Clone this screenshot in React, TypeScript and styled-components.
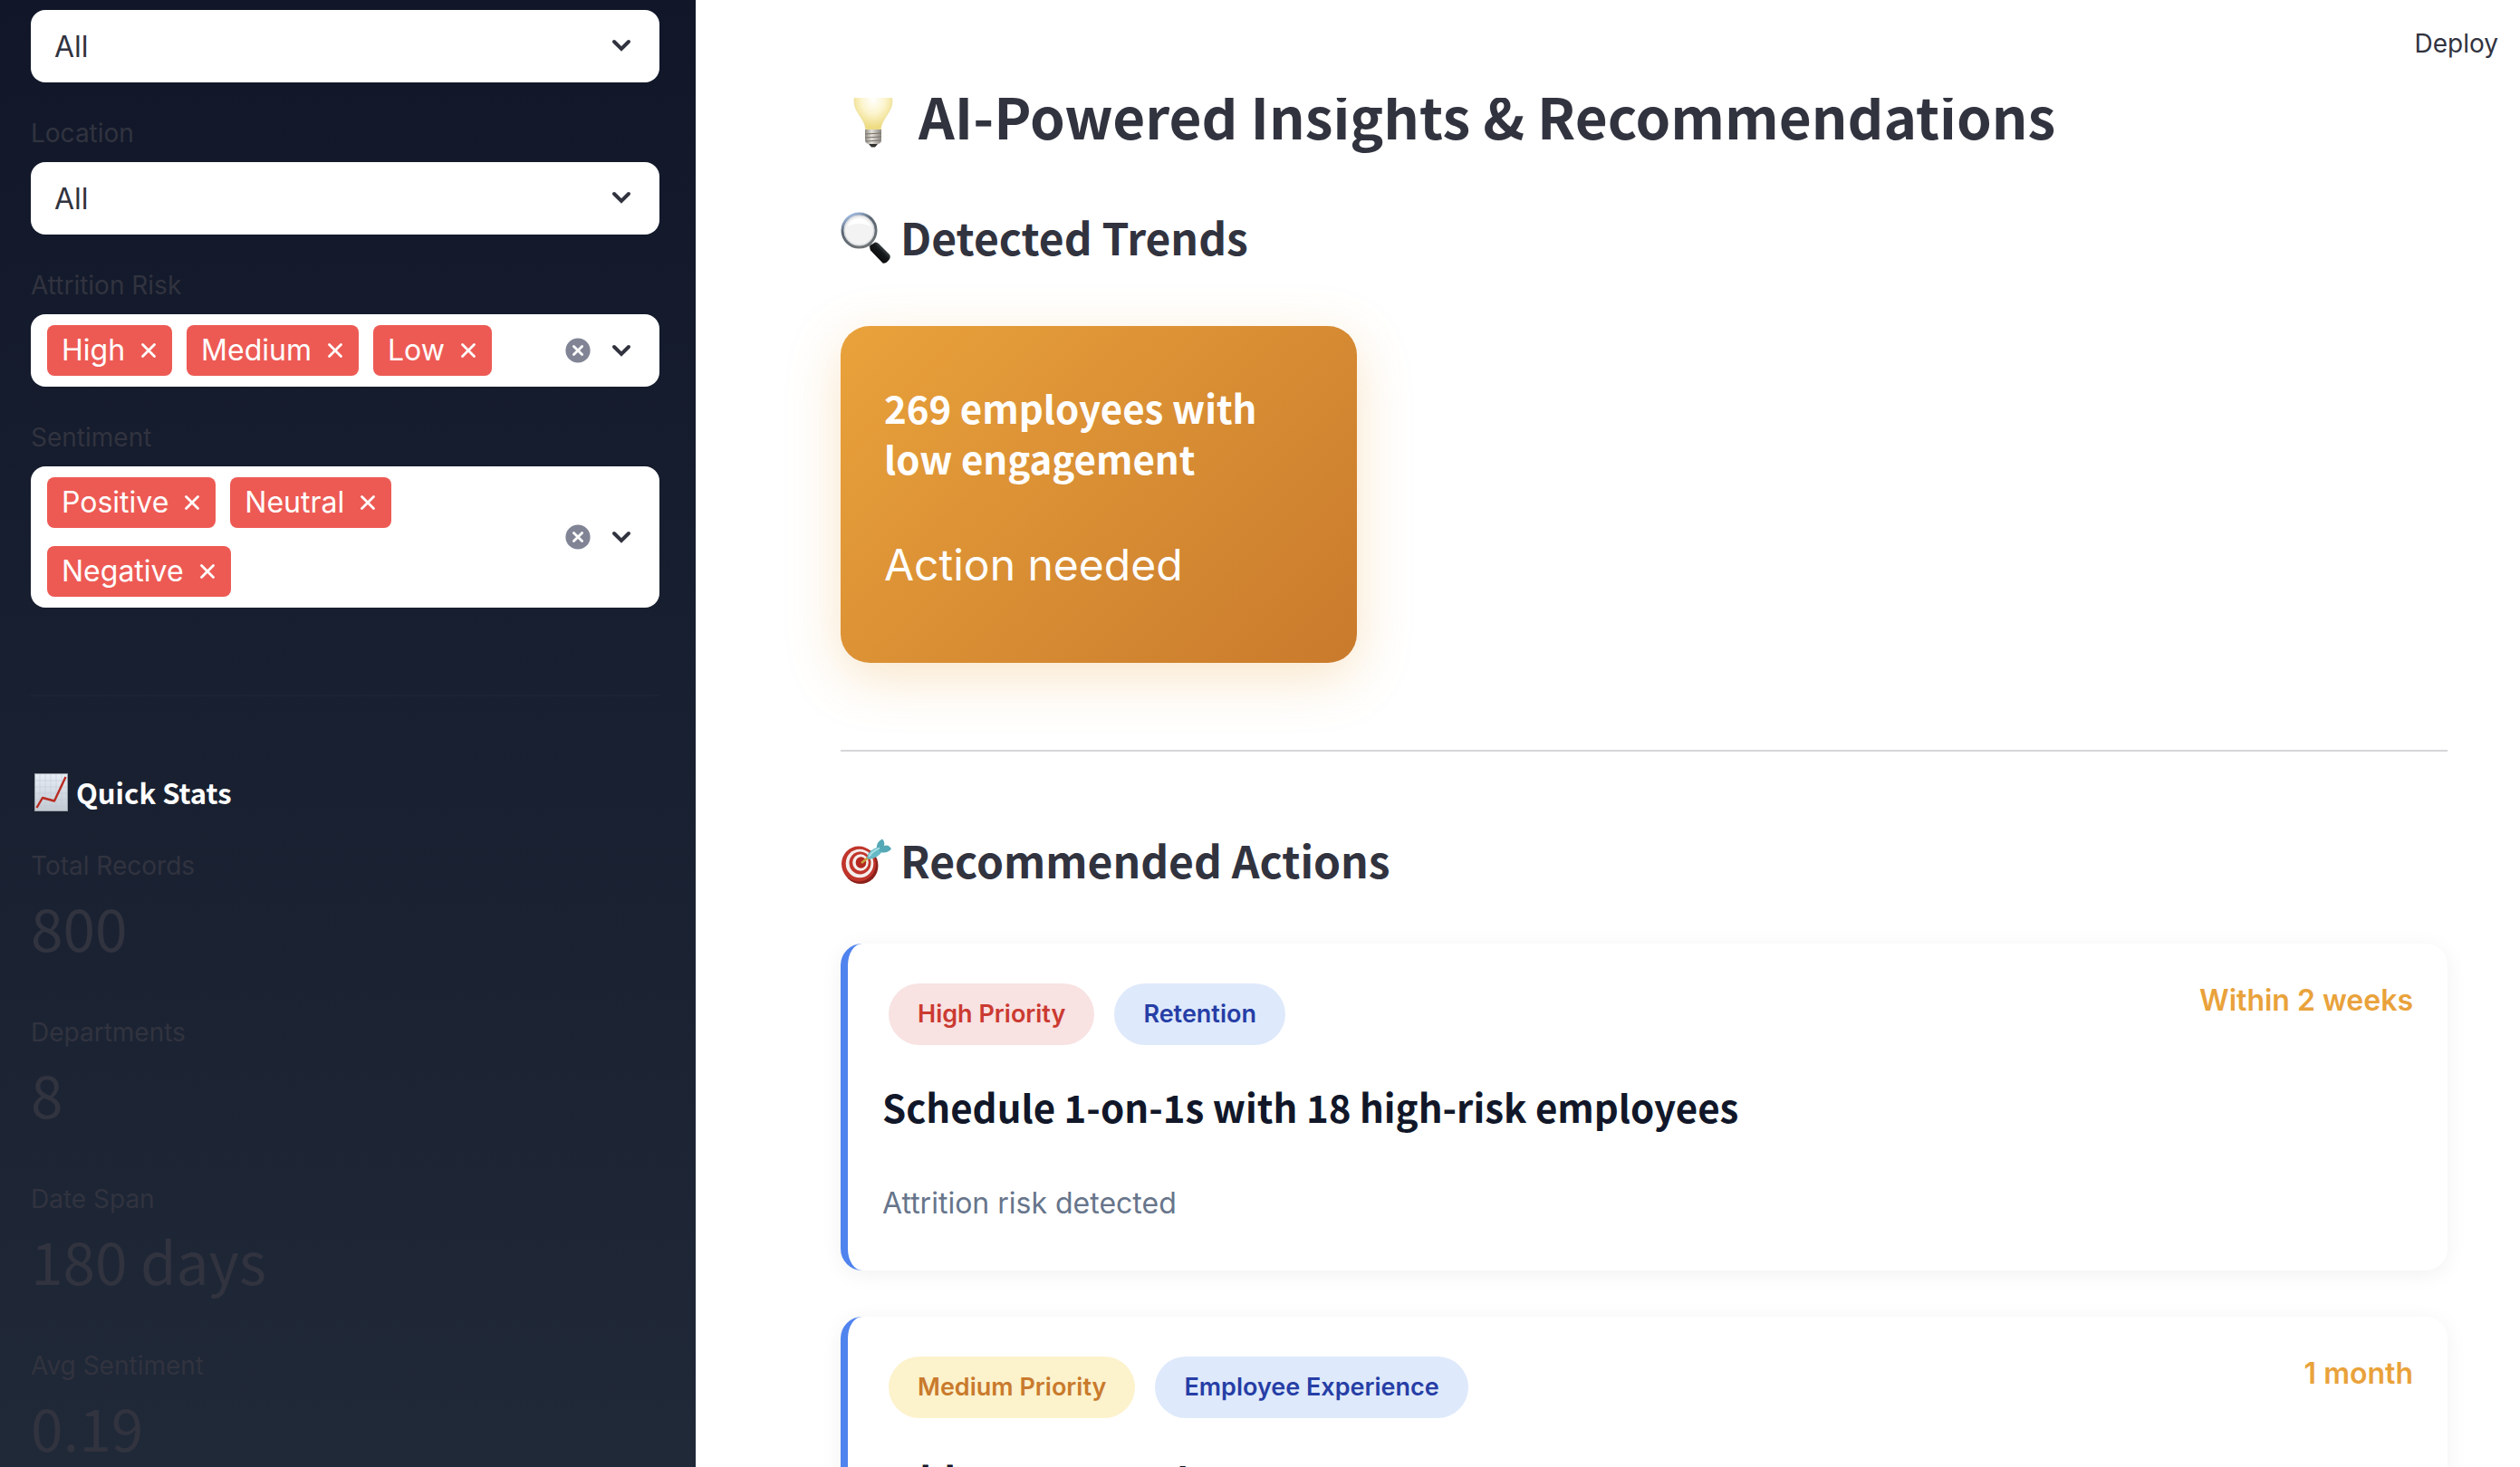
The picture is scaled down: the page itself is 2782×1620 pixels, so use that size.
import React, { useState } from "react";
import styled, { createGlobalStyle } from "styled-components";

const GlobalStyle = createGlobalStyle`
  *, *::before, *::after { box-sizing: border-box; }
  html, body, #root { height: 100%; }
  body {
    margin: 0;
    background: #ffffff;
    color: #31333f;
    font-family: Inter, "Liberation Sans", sans-serif;
    font-size: 32px;
    line-height: 1.6;
  }
  h2, h3, h4, h5, p, dl, dd { margin: 0; }
  button, select { font: inherit; color: inherit; }
`;

const headingFont = `"Noto Sans CJK SC", "Source Sans Pro", sans-serif`;

const Shell = styled.div`
  display: grid;
  grid-template-columns: 768px minmax(0, 1fr);
  height: 100vh;
  overflow: hidden;
`;

const Sidebar = styled.aside`
  height: 100vh;
  overflow: hidden;
  padding: 11px 40px 0 34px;
  background: linear-gradient(180deg, #111729 0%, #202938 100%);
`;

const Filters = styled.form`
  display: flex;
  flex-direction: column;
  gap: 32px;
`;

const Field = styled.div`
  display: flex;
  flex-direction: column;
  gap: 8px;
`;

const FieldLabel = styled.label`
  font-size: 28px;
  line-height: 48px;
`;

const ControlBox = styled.div`
  position: relative;
  display: flex;
  align-items: center;
  min-height: 80px;
  border-radius: 16px;
  background: #ffffff;
`;

const Select = styled.select`
  appearance: none;
  width: 100%;
  height: 80px;
  padding: 2px 80px 0 26px;
  border: 0;
  border-radius: 16px;
  background: transparent;
  font-size: 32px;
`;

const SelectArrow = styled.span`
  position: absolute;
  right: 22px;
  top: 19px;
  display: flex;
  pointer-events: none;
`;

const TagList = styled.div`
  display: flex;
  flex: 1;
  flex-wrap: wrap;
  gap: 20px 16px;
  padding: 12px 18px;
`;

const Tag = styled.span`
  display: inline-flex;
  align-items: center;
  gap: 12px;
  height: 56px;
  padding: 0 12px 0 16px;
  border-radius: 8px;
  background: #ed5a54;
  color: #ffffff;
  line-height: 56px;
`;

const IconButton = styled.button`
  display: inline-flex;
  align-items: center;
  justify-content: center;
  padding: 0;
  border: 0;
  background: none;
  cursor: pointer;
`;

const Controls = styled.div`
  display: flex;
  align-items: center;
  gap: 14px;
  padding-right: 22px;
`;

const SideRule = styled.hr`
  height: 2px;
  margin: 96px 0 60px;
  border: 0;
  background: rgba(49, 51, 63, 0.2);
`;

const SideHeading = styled.h5`
  display: flex;
  align-items: center;
  gap: 8px;
  height: 92px;
  margin-bottom: 13px;
  color: #ffffff;
  font-family: ${headingFont};
  font-size: 31px;
  font-weight: 700;
  line-height: 48px;
`;

const Metrics = styled.dl`
  display: flex;
  flex-direction: column;
  gap: 32px;
`;

const Metric = styled.div`
  height: 152px;
`;

const MetricLabel = styled.dt`
  font-size: 28px;
  line-height: 44px;
`;

const MetricValue = styled.dd`
  font-family: ${headingFont};
  font-size: 64px;
  font-weight: 400;
  line-height: 90px;
`;

const Main = styled.main`
  display: flex;
  flex-direction: column;
  height: 100vh;
  overflow: hidden;
`;

const TopBar = styled.header`
  position: relative;
  z-index: 1;
  display: flex;
  flex-shrink: 0;
  justify-content: flex-end;
  height: 108px;
  padding: 20px 24px 0;
  background: #ffffff;
`;

const DeployButton = styled.button`
  height: 56px;
  padding: 0;
  border: 0;
  background: none;
  font-size: 28px;
  cursor: pointer;
`;

const Content = styled.div`
  flex: 1;
  min-height: 0;
  padding: 0 80px 0 160px;
`;

const PageTitle = styled.h2`
  display: flex;
  align-items: center;
  gap: 14px;
  height: 86px;
  margin-top: -24px;
  font-family: ${headingFont};
  font-size: 62px;
  font-weight: 700;
  line-height: 86px;
  white-space: nowrap;
`;

const SectionTitle = styled.h3`
  display: flex;
  align-items: center;
  gap: 10px;
  font-family: ${headingFont};
  font-size: 48px;
  font-weight: 700;
  line-height: 68px;
  white-space: nowrap;

  svg { margin-top: 4px; }
`;

const TrendsSection = styled.section`
  padding-top: 57px;
`;

const TrendGrid = styled.div`
  display: grid;
  grid-template-columns: repeat(3, minmax(0, 1fr));
  gap: 32px;
  margin-top: 65px;
`;

const TrendCard = styled.article`
  min-height: 372px;
  padding: 62px 48px 48px;
  border-radius: 32px;
  background: linear-gradient(135deg, #e9a23b 0%, #c97a2c 100%);
  box-shadow: 0 16px 60px rgba(233, 162, 59, 0.28);
  color: #ffffff;
`;

const TrendTitle = styled.h4`
  font-family: ${headingFont};
  font-size: 42px;
  font-weight: 700;
  line-height: 56px;
`;

const TrendText = styled.p`
  margin-top: 52px;
  font-size: 48px;
  line-height: 76px;
`;

const Rule = styled.hr`
  height: 2px;
  margin: 96px 0 85px;
  border: 0;
  background: #d6d6d9;
`;

const ActionList = styled.div`
  display: flex;
  flex-direction: column;
  gap: 51px;
  margin-top: 59px;
`;

const ActionCard = styled.article`
  padding: 38px;
  height: 361px;
  border-left: 8px solid #4f83ee;
  border-radius: 24px;
  background: #ffffff;
  box-shadow: 0 4px 24px rgba(0, 0, 0, 0.06);
`;

const ActionTop = styled.div`
  display: flex;
  align-items: flex-start;
  justify-content: space-between;
`;

const Badges = styled.div`
  display: flex;
  gap: 22px;
  padding: 6px 7px;
`;

const tones = {
  high: { background: "#f8e2e2", color: "#cb3a31" },
  medium: { background: "#fcf2cc", color: "#c97a2c" },
  topic: { background: "#dee9fb", color: "#263ea6" },
};

const Badge = styled.span<{ $tone: keyof typeof tones }>`
  padding: 12px 32px;
  border-radius: 34px;
  background: ${(p) => tones[p.$tone].background};
  color: ${(p) => tones[p.$tone].color};
  font-size: 27px;
  font-weight: 600;
  line-height: 44px;
`;

const Timeline = styled.span`
  color: #e9a23b;
  font-weight: 600;
  line-height: 50px;
`;

const ActionTitle = styled.h4`
  margin-top: 30px;
  color: #111729;
  font-family: ${headingFont};
  font-size: 42px;
  font-weight: 700;
  line-height: 64px;
`;

const ActionText = styled.p`
  margin-top: 49px;
  color: #67758b;
  line-height: 51px;
`;

const ChevronIcon = () => (
  <svg width="40" height="40" viewBox="0 0 40 40" fill="none" aria-hidden="true">
    <path d="M12 16 20 24 28 16" stroke="#31333f" strokeWidth="4" strokeLinecap="round" strokeLinejoin="miter" />
  </svg>
);

const CrossIcon = () => (
  <svg width="28" height="28" viewBox="0 0 28 28" fill="none" aria-hidden="true">
    <path d="M7.5 7.5 20.5 20.5M20.5 7.5 7.5 20.5" stroke="#ffffff" strokeWidth="2.8" strokeLinecap="round" />
  </svg>
);

const ClearIcon = () => (
  <svg width="28" height="28" viewBox="0 0 28 28" fill="none" aria-hidden="true">
    <circle cx="14" cy="14" r="13.6" fill="#808495" />
    <path d="M9.4 9.4 18.6 18.6M18.6 9.4 9.4 18.6" stroke="#ffffff" strokeWidth="2.8" strokeLinecap="round" />
  </svg>
);

const ChartIcon = () => (
  <svg width="42" height="42" viewBox="0 0 42 42" aria-hidden="true">
    <defs>
      <linearGradient id="paper" x1="0" y1="0" x2="0" y2="1">
        <stop offset="0" stopColor="#e6edf6" />
        <stop offset="1" stopColor="#c3cad2" />
      </linearGradient>
    </defs>
    <rect x="4.500" y="0.500" width="36" height="41" fill="url(#paper)" stroke="#9aa1a8" strokeWidth="1" />
    <path d="M10 1V41M16 1V41M22 1V41M28 1V41M34 1V41M5 8H40M5 15H40M5 22H40M5 29H40M5 36H40" stroke="#c2cbd6" strokeWidth="0.6" />
    <path d="M6.500 38 13 27 26 30.500 38.500 4" fill="none" stroke="#b92a20" strokeWidth="2.400" strokeLinejoin="round" />
  </svg>
);

const BulbIcon = () => (
  <svg width="72" height="72" viewBox="0 0 72 72" aria-hidden="true">
    <defs>
      <radialGradient id="glass" cx="0.5" cy="0.34" r="0.62">
        <stop offset="0" stopColor="#ffffff" />
        <stop offset="0.5" stopColor="#fcf5cf" />
        <stop offset="1" stopColor="#eedb80" />
      </radialGradient>
      <linearGradient id="cap" x1="0" y1="0" x2="1" y2="0">
        <stop offset="0" stopColor="#8f8b83" />
        <stop offset="0.4" stopColor="#e4e1da" />
        <stop offset="1" stopColor="#8a867e" />
      </linearGradient>
    </defs>
    <path d="M36 1C23 1 15 10 15 21c0 12 12 19 12.600 31h16.800C45 40 57 33 57 21 57 10 49 1 36 1Z" fill="url(#glass)" stroke="#eadf9f" strokeWidth="0.8" />
    <path d="M27 52H45V64Q45 67 41 68H31Q27 67 27 64Z" fill="url(#cap)" />
    <path d="M27 57 45 56M27 61 45 60M28 65 44 64" stroke="#77736b" strokeWidth="1" />
    <path d="M31 68H41L38 71.500H34Z" fill="#34322f" />
  </svg>
);

const MagnifierIcon = () => (
  <svg width="56" height="58" viewBox="0 0 56 58" aria-hidden="true">
    <defs>
      <linearGradient id="rim" x1="0.200" y1="0" x2="0.700" y2="1">
        <stop offset="0" stopColor="#a9c6ee" />
        <stop offset="0.35" stopColor="#5b6672" />
        <stop offset="1" stopColor="#6f7376" />
      </linearGradient>
      <linearGradient id="grip" x1="0" y1="1" x2="1" y2="0">
        <stop offset="0" stopColor="#000000" />
        <stop offset="0.55" stopColor="#15181a" />
        <stop offset="0.8" stopColor="#596167" />
        <stop offset="1" stopColor="#0e0f10" />
      </linearGradient>
    </defs>
    <path d="M31 35 36 40" stroke="#8b9094" strokeWidth="4" />
    <circle cx="20.500" cy="20.500" r="18.500" fill="#f3f3f4" stroke="url(#rim)" strokeWidth="3" />
    <circle cx="20.500" cy="20.500" r="16.300" fill="none" stroke="#cfd2d6" strokeWidth="1" />
    <path d="M8 16C11 5 29 4 33 16 26 12 15 12 8 16Z" fill="#ffffff" />
    <path d="M33 37 38 33.500Q40 33 42 35L54 47Q56 50 53 53.500 50 57.500 46.500 56.500L33 42.500Q31.500 39 33 37Z" fill="url(#grip)" />
  </svg>
);

const TargetIcon = () => (
  <svg width="56" height="52" viewBox="0 0 56 52" aria-hidden="true">
    <ellipse cx="22" cy="31" rx="19.500" ry="20" fill="#8a201a" />
    <ellipse cx="20" cy="29" rx="19" ry="19.500" fill="#c0342a" />
    <ellipse cx="21" cy="28.500" rx="15.300" ry="15.800" fill="#f5eeec" />
    <ellipse cx="21.500" cy="28" rx="12" ry="12.400" fill="#c2352b" />
    <ellipse cx="22" cy="27.500" rx="8.800" ry="9.200" fill="#f5eeec" />
    <ellipse cx="22.500" cy="27.500" rx="5.800" ry="6.200" fill="#b32920" />
    <path d="M23 28 31 21.500" stroke="#caa13f" strokeWidth="2.600" />
    <path d="M29 22Q30 14 42 10L47 14Q41 23 31 24Z" fill="#66bac6" />
    <path d="M40 12Q39 5 46 1.500Q49 4 48 9Q53 7 56 12.500Q51 18 44.500 16Z" fill="#55a8b5" />
    <path d="M32 20Q35 15 42 12" fill="none" stroke="#a7dde3" strokeWidth="2.400" strokeLinecap="round" />
  </svg>
);

function SelectField({ id, label }: { id: string; label?: string }) {
  return (
    <Field>
      {label && <FieldLabel htmlFor={id}>{label}</FieldLabel>}
      <ControlBox>
        <Select id={id} aria-label={label ?? "Department"}>
          <option>All</option>
        </Select>
        <SelectArrow>
          <ChevronIcon />
        </SelectArrow>
      </ControlBox>
    </Field>
  );
}

function TagField({ id, label, options }: { id: string; label: string; options: string[] }) {
  const [tags, setTags] = useState(options);
  return (
    <Field>
      <FieldLabel as="span" id={id}>
        {label}
      </FieldLabel>
      <ControlBox role="group" aria-labelledby={id}>
        <TagList>
          {tags.map((tag) => (
            <Tag key={tag}>
              {tag}
              <IconButton type="button" aria-label={`Remove ${tag}`} onClick={() => setTags(tags.filter((t) => t !== tag))}>
                <CrossIcon />
              </IconButton>
            </Tag>
          ))}
        </TagList>
        <Controls>
          <IconButton type="button" aria-label="Clear all" onClick={() => setTags([])}>
            <ClearIcon />
          </IconButton>
          <IconButton type="button" aria-label="Open options" onClick={() => setTags(options)}>
            <ChevronIcon />
          </IconButton>
        </Controls>
      </ControlBox>
    </Field>
  );
}

const metrics = [
  { label: "Total Records", value: "800" },
  { label: "Departments", value: "8" },
  { label: "Date Span", value: "180 days" },
  { label: "Avg Sentiment", value: "0.19" },
];

type Action = {
  priority: string;
  tone: keyof typeof tones;
  topic: string;
  timeline: string;
  title: string;
  text?: string;
};

const actions: Action[] = [
  {
    priority: "High Priority",
    tone: "high",
    topic: "Retention",
    timeline: "Within 2 weeks",
    title: "Schedule 1-on-1s with 18 high-risk employees",
    text: "Attrition risk detected",
  },
  {
    priority: "Medium Priority",
    tone: "medium",
    topic: "Employee Experience",
    timeline: "1 month",
    title: "Address 18 employee concerns",
  },
];

export default function App() {
  return (
    <>
      <GlobalStyle />
      <Shell>
        <Sidebar>
          <Filters>
            <SelectField id="department" />
            <SelectField id="location" label="Location" />
            <TagField id="risk" label="Attrition Risk" options={["High", "Medium", "Low"]} />
            <TagField id="sentiment" label="Sentiment" options={["Positive", "Neutral", "Negative"]} />
          </Filters>
          <SideRule />
          <SideHeading>
            <ChartIcon />
            Quick Stats
          </SideHeading>
          <Metrics>
            {metrics.map((m) => (
              <Metric key={m.label}>
                <MetricLabel>{m.label}</MetricLabel>
                <MetricValue>{m.value}</MetricValue>
              </Metric>
            ))}
          </Metrics>
        </Sidebar>
        <Main>
          <TopBar>
            <DeployButton type="button">Deploy</DeployButton>
          </TopBar>
          <Content>
            <PageTitle>
              <BulbIcon />
              AI-Powered Insights &amp; Recommendations
            </PageTitle>
            <TrendsSection>
              <SectionTitle>
                <MagnifierIcon />
                Detected Trends
              </SectionTitle>
              <TrendGrid>
                <TrendCard>
                  <TrendTitle>269 employees with low engagement</TrendTitle>
                  <TrendText>Action needed</TrendText>
                </TrendCard>
              </TrendGrid>
            </TrendsSection>
            <Rule />
            <section>
              <SectionTitle>
                <TargetIcon />
                Recommended Actions
              </SectionTitle>
              <ActionList>
                {actions.map((a) => (
                  <ActionCard key={a.title}>
                    <ActionTop>
                      <Badges>
                        <Badge $tone={a.tone}>{a.priority}</Badge>
                        <Badge $tone="topic">{a.topic}</Badge>
                      </Badges>
                      <Timeline>{a.timeline}</Timeline>
                    </ActionTop>
                    <ActionTitle>{a.title}</ActionTitle>
                    {a.text && <ActionText>{a.text}</ActionText>}
                  </ActionCard>
                ))}
              </ActionList>
            </section>
          </Content>
        </Main>
      </Shell>
    </>
  );
}
